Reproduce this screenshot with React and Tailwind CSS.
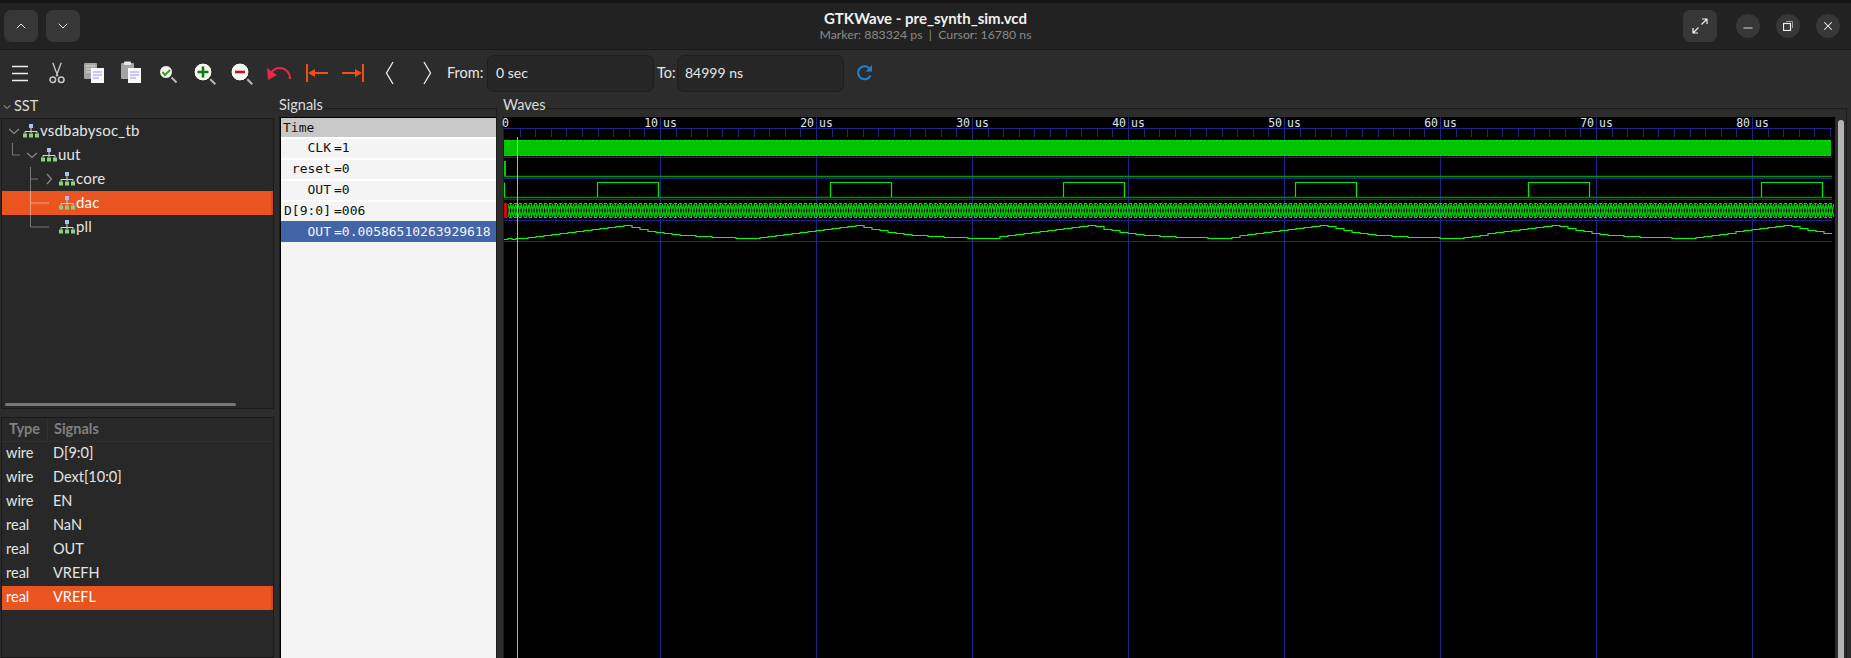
import React from "react";
import { ChevronUp, ChevronDown, Minus, X } from "lucide-react";

const UI_FONT = "font-['Lato','Noto_Sans',sans-serif]";
const MONO = "font-['DejaVu_Sans_Mono',monospace]";

const TICK = 15.6;
const PULSE_PERIOD = 232.8;

function HierIcon() {
  return (
    <svg width="16" height="14" viewBox="0 0 16 14" className="shrink-0">
      <rect x="6" y="0" width="4" height="4" fill="#a9c4ea" />
      <path d="M8 4v3M2 7.5h12M2 7.5v2M8 7v2M14 7.5v2" stroke="#d8d8d8" strokeWidth="1" fill="none" />
      <rect x="0" y="9.5" width="4" height="4" fill="#8ed07a" />
      <rect x="6" y="9.5" width="4" height="4" fill="#8ed07a" />
      <rect x="12" y="9.5" width="4" height="4" fill="#8ed07a" />
    </svg>
  );
}

function TreeRow({ width, guide, name, selected }) {
  return (
    <div className={`flex items-center h-[24px] ${selected ? "bg-[#e95420] border-r-2 border-[#d14a1c] text-white" : "text-[#e4e4e4]"}`}>
      <svg width={width} height="24" className="shrink-0">{guide}</svg>
      <HierIcon />
      <span className="ml-[1px] pb-[2px] text-[15px] tracking-[0.2px]">{name}</span>
    </div>
  );
}

function MagIcon({ r = 9, children }) {
  return (
    <svg width="26" height="26" viewBox="0 0 26 26" className="-ml-[1px]">
      <path d={`M${13 + r * 0.7} ${13 + r * 0.7}l5 5`} stroke="#b8b8b8" strokeWidth="2" />
      <circle cx="12" cy="12" r={r} fill="#f6f6ee" stroke="#222" strokeWidth="1" />
      {children}
    </svg>
  );
}

function DocIcon({ clip }) {
  return (
    <svg width="24" height="24" viewBox="0 0 24 24">
      <rect x="2" y="2" width="13" height="16" rx="1" fill="#a4a4a4" />
      {clip && <rect x="5" y="0.5" width="7" height="3.5" rx="1" fill="#e8e8e8" />}
      {!clip && <path d="M4 5h9M4 8h9M4 11h9" stroke="#d8d8d8" strokeWidth="1" />}
      <rect x="9" y="7" width="13" height="15" fill="#f8f8f8" />
      <path d="M11 11h9M11 14h9M11 17h6" stroke="#9a9ae8" strokeWidth="1" />
    </svg>
  );
}

const TOOLS = [
  <svg key="menu" width="20" height="20" viewBox="0 0 20 20"><path d="M2 3.5h16M2 10.5h16M2 17.5h16" stroke="#eee" strokeWidth="1.5" /></svg>,
  <svg key="cut" width="18" height="22" viewBox="0 0 20 26">
    <path d="M5 1l6 16M15 1l-6 16" stroke="#c8c8c8" strokeWidth="1.6" fill="none" />
    <circle cx="5" cy="21" r="3.3" fill="none" stroke="#c8c8c8" strokeWidth="1.8" />
    <circle cx="15" cy="21" r="3.3" fill="none" stroke="#c8c8c8" strokeWidth="1.8" />
  </svg>,
  <DocIcon key="copy" />,
  <DocIcon key="paste" clip />,
  <MagIcon key="fit" r={6.5}>
    <path d="M8.5 12l2.5 3 5-5" stroke="#3aa02c" strokeWidth="2" fill="none" />
  </MagIcon>,
  <MagIcon key="in">
    <path d="M12 6.5v11M6.5 12h11" stroke="#0a7a1a" strokeWidth="2.6" />
  </MagIcon>,
  <MagIcon key="out">
    <path d="M7 12h10" stroke="#c01230" strokeWidth="2.6" />
  </MagIcon>,
  <svg key="undo" width="26" height="20" viewBox="0 0 26 20">
    <path d="M24 16C24 9 19 5 14 5C10 5 7 7 5 10" stroke="#e8274b" strokeWidth="2" fill="none" />
    <path d="M1 5l1 12 9-5z" fill="#e8274b" />
  </svg>,
  <svg key="start" width="24" height="20" viewBox="0 0 24 20" className="ml-[2px]">
    <path d="M2 1v18" stroke="#f04e12" strokeWidth="2" />
    <path d="M6 10h17" stroke="#f04e12" strokeWidth="2" />
    <path d="M3 10l7-4v8z" fill="#f04e12" />
  </svg>,
  <svg key="end" width="24" height="20" viewBox="0 0 24 20">
    <path d="M22 1v18" stroke="#f04e12" strokeWidth="2" />
    <path d="M1 10h17" stroke="#f04e12" strokeWidth="2" />
    <path d="M21 10l-7-4v8z" fill="#f04e12" />
  </svg>,
  <svg key="prev" width="10" height="24" viewBox="0 0 10 24"><path d="M8 1L1.5 12 8 23" stroke="#eee" strokeWidth="1.3" fill="none" /></svg>,
  <svg key="next" width="10" height="24" viewBox="0 0 10 24"><path d="M2 1l6.5 11L2 23" stroke="#eee" strokeWidth="1.3" fill="none" /></svg>,
];

const SIGNALS = [
  { name: "CLK", value: "1" },
  { name: "reset", value: "0" },
  { name: "OUT", value: "0" },
  { name: "D[9:0]", value: "006" },
  { name: "OUT", value: "0.00586510263929618", selected: true },
];

const TYPES = [
  ["wire", "D[9:0]"],
  ["wire", "Dext[10:0]"],
  ["wire", "EN"],
  ["real", "NaN"],
  ["real", "OUT"],
  ["real", "VREFH"],
  ["real", "VREFL"],
];

function buildPulseHigh() {
  let d = "M504.5 182.5V197";
  for (let k = 0; k < 6; k++) {
    const rise = Math.round(597 + k * PULSE_PERIOD) + 0.5;
    d += `M${rise} 197V182.5H${rise + 61}V197`;
  }
  return d;
}

function buildBus() {
  let d = "";
  for (let x = 508; x < 1832; x += 2.62) {
    d += `M${x} 204L${x + 2.62} 217M${x} 217L${x + 2.62} 204`;
  }
  return d;
}

function buildAnalog() {
  const level = (x) => {
    let best = 0;
    for (let k = -1; k < 7; k++) {
      const dx = x - (628 + k * PULSE_PERIOD);
      const v = dx < 0 ? Math.max(0, 1 + dx / 105) : Math.exp(-dx / 42);
      best = Math.max(best, v);
    }
    return Math.round(238.5 - 14 * best) + 0.5;
  };
  let d = "M504 239.5H508V238.5H512V239.5H516V238.5";
  for (let x = 520; x < 1832; x += 8) {
    d += `H${x}V${level(x + 4)}`;
  }
  return d + "H1832";
}

function WavePlot() {
  const ticks = [];
  for (let i = 1; i * TICK < 1328; i++) ticks.push(504 + i * TICK);
  const majors = [1, 2, 3, 4, 5, 6, 7, 8];
  return (
    <svg width="1331" height="544" viewBox="504 114 1331 544" className="block overflow-visible">
      <rect x="504" y="117" width="1331" height="541" fill="#000" />
      {/* grid */}
      {[128, 157, 178, 199, 220, 241].map((y) => (
        <path key={y} d={`M504 ${y + 0.5}H1832`} stroke="#22228a" strokeWidth="1" />
      ))}
      {ticks.map((x) => (
        <path key={x} d={`M${Math.round(x) + 0.5} 128V137`} stroke="#22228a" strokeWidth="1" />
      ))}
      {majors.map((k) => {
        const x = Math.round(504 + k * 156) + 0.5;
        return (
          <g key={k}>
            <path d={`M${x} 117V658`} stroke="#22228a" strokeWidth="1" />
            <text x={x - 2.5} y="126.5" textAnchor="end" fontSize="11.5" fill="#dfe6f0" className={MONO}>{k * 10}</text>
            <text x={x + 2.5} y="126.5" fontSize="11.5" fill="#dfe6f0" className={MONO}>us</text>
          </g>
        );
      })}
      <text x="502" y="126.5" fontSize="11.5" fill="#dfe6f0" className={MONO}>0</text>

      {/* CLK */}
      <rect x="504" y="140" width="1327" height="16" fill="#00c400" />
      <path d="M504 140.5H1832M504 155.5H1832" stroke="#00f000" strokeWidth="1" strokeDasharray="2 2" />

      {/* reset */}
      <rect x="504" y="161" width="2" height="15" fill="#00d000" />
      <path d="M504 176.5H1832" stroke="#009a00" strokeWidth="1.5" />

      {/* OUT */}
      <path d="M504 197.5H1832" stroke="#009000" strokeWidth="1.4" />
      <path d={buildPulseHigh()} stroke="#00e800" strokeWidth="1.2" fill="none" />

      {/* D[9:0] */}
      <path d={buildBus()} stroke="#00d000" strokeWidth="1.2" fill="none" />
      <path d="M504 203.5H1832M504 217.5H1832" stroke="#00e000" strokeWidth="1" strokeDasharray="3 2" />
      <rect x="504" y="203" width="3" height="15" fill="#e00000" />

      {/* real OUT */}
      <path d={buildAnalog()} stroke="#00ff00" strokeWidth="1.2" fill="none" />

      {/* cursor */}
      <path d="M517.5 137V658" stroke="#ff9080" strokeWidth="1" />
    </svg>
  );
}

export default function App() {
  return (
    <div className={`w-[1851px] h-[658px] overflow-hidden flex flex-col bg-[#2c2c2c] text-[#e6e6e6] ${UI_FONT}`}>
      {/* Title bar */}
      <div className="h-[50px] shrink-0 grid grid-cols-[1fr_auto_1fr] items-center bg-[#222222] border-t-[3px] border-t-[#161616] border-b border-b-[#181818]">
        <div className="flex gap-[8px] pl-[4px]">
          <button className="w-[34px] h-[32px] rounded-[7px] bg-[#373737] flex items-center justify-center">
            <ChevronUp size={16} strokeWidth={1.5} className="text-[#e8e8e8]" />
          </button>
          <button className="w-[34px] h-[32px] rounded-[7px] bg-[#373737] flex items-center justify-center">
            <ChevronDown size={16} strokeWidth={1.5} className="text-[#e8e8e8]" />
          </button>
        </div>
        <div className="text-center leading-none -mt-[1px]">
          <div className="text-[15px] font-bold text-[#f0f0f0] leading-[17px]">GTKWave - pre_synth_sim.vcd</div>
          <div className="text-[12.3px] text-[#8a8a8a] leading-[15px]">Marker: 883324 ps&nbsp; | &nbsp;Cursor: 16780 ns</div>
        </div>
        <div className="flex items-center justify-end pr-[11px]">
          <button className="w-[34px] h-[32px] rounded-[7px] bg-[#373737] flex items-center justify-center mr-[19px]">
            <svg width="16" height="16" viewBox="0 0 16 16" fill="none" stroke="#f0f0f0" strokeWidth="1.2">
              <path d="M9.5 6.5L15 1M10 1h5v5M6.5 9.5L1 15M1 10v5h5" />
            </svg>
          </button>
          <div className="flex gap-[16px]">
            <button className="w-[24px] h-[24px] rounded-full bg-[#373737] flex items-center justify-center">
              <Minus size={14} strokeWidth={1.5} className="text-[#f0f0f0] translate-y-[2px]" />
            </button>
            <button className="w-[24px] h-[24px] rounded-full bg-[#373737] flex items-center justify-center">
              <svg width="10" height="10" viewBox="0 0 10 10" fill="none" stroke="#f0f0f0">
                <rect x="0.5" y="2.5" width="7" height="7" strokeWidth="1.2" />
                <path d="M3 0.5h6.5V7" stroke="#9a9a9a" strokeWidth="1" />
              </svg>
            </button>
            <button className="w-[24px] h-[24px] rounded-full bg-[#373737] flex items-center justify-center">
              <X size={14} strokeWidth={1.8} className="text-[#f0f0f0]" />
            </button>
          </div>
        </div>
      </div>

      {/* Toolbar */}
      <div className="h-[46px] shrink-0 flex items-center pl-[1px] text-[14.5px]">
        {TOOLS.map((tool) => (
          <div key={tool.key} className="w-[37px] h-[37px] flex items-center justify-center shrink-0">{tool}</div>
        ))}
        <span className="ml-[2px] w-[40px]">From:</span>
        <div className="w-[167px] h-[37px] rounded-[7px] bg-[#262626] border border-[#1e1e1e] flex items-center pl-[8px] pb-[1px] text-[14px]">0 sec</div>
        <span className="ml-[3px] w-[20px]">To:</span>
        <div className="w-[167px] h-[37px] rounded-[7px] bg-[#262626] border border-[#1e1e1e] flex items-center pl-[7px] pb-[1px] text-[14px]">84999 ns</div>
        <svg width="18" height="18" viewBox="0 0 18 18" fill="none" className="ml-[12px]">
          <path d="M14.5 11.5A6.5 6.5 0 1 1 13 4" stroke="#2580cf" strokeWidth="2" />
          <path d="M16 1v6.5H9.5z" fill="#2580cf" />
        </svg>
      </div>

      {/* Panes */}
      <div className="flex-1 min-h-0 flex">
        {/* SST */}
        <div className="w-[277px] shrink-0 flex flex-col pl-[1px] pr-[3px]">
          <div className="h-[22px] shrink-0 flex items-center text-[14.5px] text-[#dcdcdc]">
            <ChevronDown size={12} strokeWidth={1.5} />
            <span className="ml-[1px] pb-[2px]">SST</span>
          </div>
          <div className="h-[291px] shrink-0 bg-[#282828] border border-[#1a1a1a] flex flex-col">
            <div className="flex-1">
              <TreeRow width={21} name="vsdbabysoc_tb" guide={<path d="M7 10l5 4.5 5-4.5" stroke="#8a8a8a" strokeWidth="1.2" fill="none" />} />
              <TreeRow width={39} name="uut" guide={<g fill="none"><path d="M10.5 0v12H18" stroke="#777" /><path d="M25 10l5 4.5 5-4.5" stroke="#8a8a8a" strokeWidth="1.2" /></g>} />
              <TreeRow width={57} name="core" guide={<g fill="none"><path d="M28.5 0v24M28.5 12H36" stroke="#777" /><path d="M45 7l4.5 5-4.5 5" stroke="#8a8a8a" strokeWidth="1.2" /></g>} />
              <TreeRow width={57} name="dac" selected guide={<path d="M28.5 0v24M28.5 12H47" stroke="#f0a080" fill="none" />} />
              <TreeRow width={57} name="pll" guide={<path d="M28.5 0v12H47" stroke="#777" fill="none" />} />
            </div>
            <div className="h-[7px] px-[3px] flex items-center shrink-0">
              <div className="w-[231px] h-[3px] rounded-full bg-[#777777]" />
            </div>
          </div>
          <div className="h-[8px] shrink-0" />
          <div className="flex-1 bg-[#282828] border border-[#1a1a1a] text-[14.5px] text-[#e4e4e4]">
            <div className="h-[24px] flex items-center font-bold text-[#808080] border-b border-[#303030]">
              <span className="w-[46px] pl-[7px] pb-[2px] border-r border-[#303030]">Type</span>
              <span className="pl-[6px] pb-[2px]">Signals</span>
            </div>
            {TYPES.map(([type, name]) => (
              <div key={name} className={`h-[24px] flex items-center pb-[2px] ${name === "VREFL" ? "bg-[#e95420] border-r-2 border-[#d14a1c] text-white" : ""}`}>
                <span className="w-[51px] pl-[4px]">{type}</span>
                <span>{name}</span>
              </div>
            ))}
          </div>
        </div>

        {/* Signals */}
        <div className="w-[223px] shrink-0 flex flex-col pl-[2px] pr-[3px]">
          <div className="h-[20px] shrink-0 -mb-[8px] relative z-10 w-fit bg-[#2c2c2c] pr-[1px] text-[14.5px] leading-[18px] text-[#dcdcdc]">Signals</div>
          <div className="flex-1 min-h-0 flex flex-col border border-b-0 border-[#1c1c1c] pt-[8px]">
            <div className={`flex-1 bg-[#f4f4f4] border-l border-t border-black overflow-hidden text-[13px] text-[#111] ${MONO}`}>
              <div className="h-[19px] bg-[#c8c8c8] pl-[2px] leading-[20px]">Time</div>
              {SIGNALS.map((s) => (
                <div key={s.name + s.value} className={`h-[21px] border-t-2 flex leading-[18px] whitespace-nowrap ${s.selected ? "bg-[#4464a8] text-[#f4f4f4] border-[#4464a8]" : "border-white"}`}>
                  <span className="w-[50px] shrink-0 text-right">{s.name}</span>
                  <span className="ml-[3px]">={s.value}</span>
                </div>
              ))}
            </div>
          </div>
        </div>

        {/* Waves */}
        <div className="flex-1 min-w-0 flex flex-col pl-[3px] pr-[4px]">
          <div className="h-[20px] shrink-0 -mb-[8px] relative z-10 w-fit bg-[#2c2c2c] pr-[1px] text-[14.5px] leading-[18px] text-[#dcdcdc]">Waves</div>
          <div className="flex-1 min-h-0 flex border border-b-0 border-[#1c1c1c] pt-[5px]">
            <div className="w-[1331px] shrink-0">
              <WavePlot />
            </div>
            <div className="flex-1 pt-[6px] pl-[3px] pr-[3px]">
              <div className="w-[6px] h-full rounded-t-full bg-[#b4b4b4]" />
            </div>
          </div>
        </div>
      </div>
    </div>
  );
}
